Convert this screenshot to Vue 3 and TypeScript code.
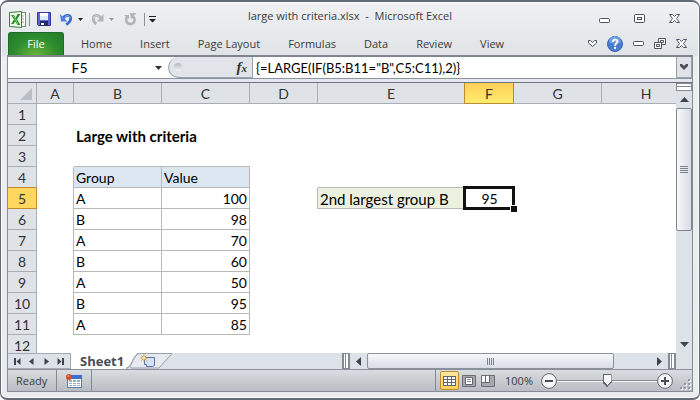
<script setup lang="ts">
import { ref } from 'vue'

interface Row {
  n: number
  b?: string
  c?: string | number
  e?: string
  f?: number
}

const tabs: string[] = ['Home', 'Insert', 'Page Layout', 'Formulas', 'Data', 'Review', 'View']
const columns: string[] = ['A', 'B', 'C', 'D', 'E', 'F', 'G', 'H']
const rows: Row[] = [
  { n: 1 },
  { n: 2, b: 'Large with criteria' },
  { n: 3 },
  { n: 4, b: 'Group', c: 'Value' },
  { n: 5, b: 'A', c: 100, e: '2nd largest group B', f: 95 },
  { n: 6, b: 'B', c: 98 },
  { n: 7, b: 'A', c: 70 },
  { n: 8, b: 'B', c: 60 },
  { n: 9, b: 'A', c: 50 },
  { n: 10, b: 'B', c: 95 },
  { n: 11, b: 'A', c: 85 },
  { n: 12 },
]

const cellName = ref('F5')
const formula = ref('{=LARGE(IF(B5:B11="B",C5:C11),2)}')
const zoom = ref(50)

function cellClass(row: Row, col: string): Record<string, boolean> {
  const inTable = row.n >= 4 && row.n <= 11 && (col === 'B' || col === 'C')
  return {
    boxed: inTable,
    under: row.n === 3 && (col === 'B' || col === 'C'),
    beside: row.n >= 4 && row.n <= 11 && col === 'A',
    heading: inTable && row.n === 4,
    num: inTable && col === 'C' && row.n > 4,
    title: row.n === 2 && col === 'B',
    label: row.n === 5 && col === 'E',
    'label-top': row.n === 4 && col === 'E',
    'label-side': row.n === 5 && col === 'D',
    active: row.n === 5 && col === 'F',
  }
}

function cellText(row: Row, col: string): string {
  const key = col.toLowerCase() as 'b' | 'c' | 'e' | 'f'
  return String(row[key] ?? '')
}
</script>

<template>
  <div class="window">
    <header class="titlebar">
      <div class="quick">
        <svg width="17" height="17" viewBox="0 0 17 17" aria-hidden="true">
          <rect x="3.500" y="1.500" width="13" height="14" fill="#fff" stroke="#6b9a72" />
          <path d="M12 4h3v2h-3zM12 7h3v2h-3zM12 10h3v2h-3z" fill="#b9d8ba" />
          <path d="M.5 1.500L12.500.5v16L.5 15.500z" fill="#eef7e9" stroke="#378344" />
          <path d="M2 4h3l1.500 3L8.500 3H11.500L8 8.500l3.500 5.500H8.500L6.300 10.500 4.500 13H2l3-4.500z" fill="#269239" />
          <path d="M4 4.500L9 13" stroke="#83c85c" />
        </svg>
        <span class="sep"></span>
        <button class="save" aria-label="Save">
          <svg width="14" height="14" viewBox="0 0 14 14">
            <path d="M.5.5h13v13H1.500l-1-1z" fill="#5f66d3" stroke="#343a99" />
            <path d="M3 1h8v7H3z" fill="#dceaff" />
            <path d="M3 1h8v3H3z" fill="#fff" />
            <path d="M3 9h8v5H3z" fill="#252b66" />
            <path d="M4 11h3v2H4z" fill="#fff" />
          </svg>
        </button>
        <button class="undo" aria-label="Undo">
          <svg width="13" height="13" viewBox="0 0 13 13">
            <path d="M3 5.500C5 1.500 10.700 1 10.700 5.500c0 3-2 4.500-4.500 6" fill="none" stroke="#336bc5" stroke-width="2.800" />
            <path d="M0 1l1 7.500h6.500z" fill="#4b83d8" />
            <path d="M4 4.500C6 2 9.500 2 10.500 5" fill="none" stroke="#8bb4ed" />
          </svg>
        </button>
        <svg class="drop" width="5" height="3" viewBox="0 0 5 3"><path d="M0 0h5L2.500 3z" fill="#222" /></svg>
        <button class="redo" aria-label="Redo">
          <svg width="13" height="13" viewBox="0 0 13 13">
            <path d="M10 5.500C8 1.500 2.300 1 2.300 5.500c0 3 1 4.500 3 5.500" fill="none" stroke="#b1b4b8" stroke-width="2.800" />
            <path d="M12.500 1v7.500H6z" fill="#b1b4b8" />
            <path d="M9 4.500C7 2 3 2 2.500 5.500" fill="none" stroke="#d4d6d8" />
          </svg>
        </button>
        <svg class="drop" width="5" height="3" viewBox="0 0 5 3"><path d="M0 0h5L2.500 3z" fill="#999da2" /></svg>
        <button class="repeat" aria-label="Repeat">
          <svg width="13" height="13" viewBox="0 0 13 13">
            <path d="M3 4c-2 3-.5 7 3.500 7S12 6.500 9 3.500" fill="none" stroke="#b0b3b7" stroke-width="2.500" />
            <path d="M6 0h6.500L7 6z" fill="#b0b3b7" /><path d="M0 2h5v4z" fill="#b0b3b7" />
          </svg>
        </button>
        <span class="sep"></span>
        <svg class="more" width="7" height="7" viewBox="0 0 7 7"><path d="M0 0h7v1H0zM0 3h7L3.500 6.500z" fill="#222" /></svg>
      </div>
      <h1>large with criteria.xlsx&nbsp; -&nbsp; Microsoft Excel</h1>
      <div class="controls">
        <button aria-label="Minimize">
          <svg width="11" height="5" viewBox="0 0 11 5"><rect x=".5" y=".5" width="10" height="4" rx="1" fill="#fff" stroke="#4c5263" /></svg>
        </button>
        <button aria-label="Maximize">
          <svg width="11" height="9" viewBox="0 0 11 9"><rect x=".5" y=".5" width="10" height="8" rx="1" fill="#fff" stroke="#4c5263" /><rect x="3.500" y="3.500" width="4" height="2" fill="#fff" stroke="#4c5263" /></svg>
        </button>
        <button aria-label="Close">
          <svg width="11" height="9" viewBox="0 0 11 9"><path d="M.5.5h3l2 2 2-2h3L7.500 4.500l3 4h-3l-2-2-2 2h-3l3-4z" fill="#fff" stroke="#4c5263" /></svg>
        </button>
      </div>
    </header>

    <nav class="ribbon" aria-label="Ribbon">
      <button class="file">File</button>
      <button v-for="tab in tabs" :key="tab" class="tab">{{ tab }}</button>
      <div class="bookctl">
        <button aria-label="Expand the ribbon">
          <svg width="9" height="7" viewBox="0 0 9 7"><path d="M.5 2V.5h2l2 2 2-2h2V3l-4 3.500L.5 3z" fill="#fff" stroke="#4c5263" /></svg>
        </button>
        <button aria-label="Help">
          <svg width="16" height="16" viewBox="0 0 16 16">
            <circle cx="8" cy="8" r="7.500" fill="#4a7dd0" stroke="#3567b5" />
            <path d="M2 6a6 6 0 0 1 12 0c-3 2-9 2-12 0z" fill="#709ee3" />
            <path d="M5.700 6c0-3.200 4.800-3.200 4.800-.4C10.500 7.500 8 7.500 8 9.800" fill="none" stroke="#fff" stroke-width="1.800" />
            <circle cx="8" cy="12" r="1.200" fill="#fff" />
          </svg>
        </button>
        <button aria-label="Minimize workbook">
          <svg width="11" height="5" viewBox="0 0 11 5"><rect x=".5" y=".5" width="10" height="4" rx="1" fill="#fff" stroke="#4c5263" /></svg>
        </button>
        <button aria-label="Restore workbook">
          <svg width="12" height="11" viewBox="0 0 12 11"><path d="M4.500.5h7v6h-7z" fill="#fff" stroke="#4c5263" /><path d="M6.500 2.500h3v2h-3z" fill="#fff" stroke="#4c5263" /><path d="M.5 4.500h7v6h-7z" fill="#fff" stroke="#4c5263" /><path d="M2.500 6.500h3v2h-3z" fill="#fff" stroke="#4c5263" /></svg>
        </button>
        <button aria-label="Close workbook">
          <svg width="11" height="9" viewBox="0 0 11 9"><path d="M.5.5h3l2 2 2-2h3L7.500 4.500l3 4h-3l-2-2-2 2h-3l3-4z" fill="#fff" stroke="#4c5263" /></svg>
        </button>
      </div>
    </nav>

    <main class="book">
      <div class="formulabar">
        <input v-model="cellName" class="namebox" aria-label="Name box" />
        <svg class="namedrop" width="7" height="4" viewBox="0 0 7 4"><path d="M0 0h7L3.500 4z" fill="#333" /></svg>
        <div class="fxarea">
          <span class="grip"></span>
          <button class="fx" aria-label="Insert function">f<small>x</small></button>
        </div>
        <input v-model="formula" class="formula" aria-label="Formula bar" />
        <button class="expand" aria-label="Expand formula bar">
          <svg width="8" height="6" viewBox="0 0 8 6"><path d="M0 0h2l2 2 2-2h2v2L4 6 0 2z" fill="#4a4f58" /></svg>
        </button>
      </div>

      <div class="sheet">
        <div class="cells">
          <table>
            <colgroup>
              <col class="w-head" /><col class="w-a" /><col class="w-b" /><col class="w-b" /><col class="w-d" /><col class="w-e" /><col class="w-f" /><col class="w-b" /><col />
            </colgroup>
            <thead>
              <tr>
                <th class="corner" aria-label="Select all">
                  <svg width="12" height="12" viewBox="0 0 12 12"><path d="M12 0v12H0z" fill="#b9bec5" /></svg>
                </th>
                <th v-for="c in columns" :key="c" scope="col" :class="{ picked: c === 'F', 'pre-picked': c === 'E' }">{{ c }}</th>
              </tr>
            </thead>
            <tbody>
              <tr v-for="row in rows" :key="row.n">
                <th scope="row" :class="{ picked: row.n === 5, 'over-picked': row.n === 4 }">{{ row.n }}</th>
                <td v-for="c in columns" :key="c" :class="cellClass(row, c)">{{ cellText(row, c) }}<i v-if="row.n === 5 && c === 'F'" class="cursor"></i></td>
              </tr>
            </tbody>
          </table>
        </div>
        <div class="vscroll">
          <span class="splitter"></span>
          <button class="arrow" aria-label="Scroll up"><svg width="9" height="5" viewBox="0 0 9 5"><path d="M4.500 0L9 5H0z" fill="#3f434a" /></svg></button>
          <div class="track"><span class="thumb"><i></i><i></i><i></i><i></i></span></div>
          <button class="arrow" aria-label="Scroll down"><svg width="9" height="5" viewBox="0 0 9 5"><path d="M0 0h9L4.500 5z" fill="#3f434a" /></svg></button>
        </div>
      </div>

      <div class="sheetbar">
        <div class="nav">
          <button aria-label="First sheet"><svg width="7" height="7" viewBox="0 0 7 7"><path d="M0 0h2v7H0zM6.500 0v7L2.500 3.500z" fill="#3f444d" /></svg></button>
          <button aria-label="Previous sheet"><svg width="7" height="7" viewBox="0 0 7 7"><path d="M5.500 0v7L1 3.500z" fill="#3f444d" /></svg></button>
          <button aria-label="Next sheet"><svg width="7" height="7" viewBox="0 0 7 7"><path d="M1.500 0v7L6 3.500z" fill="#3f444d" /></svg></button>
          <button aria-label="Last sheet"><svg width="7" height="7" viewBox="0 0 7 7"><path d="M.5 0v7L4.500 3.500zM5 0h2v7H5z" fill="#3f444d" /></svg></button>
        </div>
        <button class="sheettab">Sheet1</button>
        <button class="newtab" aria-label="Insert worksheet">
          <svg width="48" height="16" viewBox="0 0 48 16">
            <path d="M0 15.500C7 15 7 .5 14 .5H46L33 15H6C3 15 3 11 4 9" fill="#e6e9ee" stroke="#9aa1ab" />
            <path d="M0 0H13C7 1 6 15 0 15z" fill="#fff" />
            <path d="M0 15C6 14 7 1 13 .5" fill="none" stroke="#9aa1ab" />
            <path d="M18.500 4.500h10v8l-2 1h-6v-2h-2z" fill="#d5e2f5" stroke="#5673a8" />
            <path d="M18 1.500v7M14.500 5h7M15.500 2.500l5 5M20.500 2.500l-5 5" stroke="#d68a29" />
            <circle cx="18" cy="5" r="1.500" fill="#fff4b0" />
          </svg>
        </button>
        <span class="fill"></span>
        <span class="hsplit"></span>
        <button class="harrow" aria-label="Scroll left"><svg width="5" height="9" viewBox="0 0 5 9"><path d="M5 0v9L0 4.500z" fill="#3f434a" /></svg></button>
        <div class="htrack"><span class="hthumb"><i></i><i></i><i></i><i></i></span></div>
        <button class="harrow" aria-label="Scroll right"><svg width="5" height="9" viewBox="0 0 5 9"><path d="M0 0v9l5-4.500z" fill="#3f434a" /></svg></button>
        <span class="hsplit"></span>
        <span class="bend"></span>
      </div>

      <footer class="status">
        <span class="ready">Ready</span>
        <button class="macro" aria-label="Record macro">
          <svg width="16" height="14" viewBox="0 0 16 14">
            <rect x="1.500" y="1.500" width="14" height="12" fill="#fff" stroke="#5579b6" />
            <path d="M1 1h15v4H1z" fill="#3b6fd0" />
            <path d="M3 6h3v2H3zM7 6h3v2H7zM11 6h3v2h-3zM3 9h3v1H3zM7 9h3v1H7zM11 9h3v1h-3zM3 11h3v1H3zM7 11h3v1H7zM11 11h3v1h-3z" fill="#9aabc8" />
            <circle cx="3" cy="3" r="3" fill="#cf4a32" /><circle cx="2.500" cy="2" r="1" fill="#f09a80" />
          </svg>
        </button>
        <span class="fill"></span>
        <div class="views">
          <button class="view on" aria-label="Normal view">
            <svg width="13" height="10" viewBox="0 0 13 10"><path d="M0 0h13v10H0z" fill="#62656b" /><path d="M1 1h3v2H1zM5 1h3v2H5zM9 1h3v2H9zM1 4h3v2H1zM5 4h3v2H5zM9 4h3v2H9zM1 7h3v2H1zM5 7h3v2H5zM9 7h3v2H9z" fill="#fff" /></svg>
          </button>
          <button class="view" aria-label="Page layout view">
            <svg width="14" height="12" viewBox="0 0 14 12"><path d="M.5.5h13v11H.5z" fill="#a5a9af" stroke="#6a6e75" /><path d="M3.500 2.500h7v7h-7z" fill="#fff" stroke="#62666d" /><path d="M5 4.500h4M5 6.500h4" stroke="#85898f" /></svg>
          </button>
          <button class="view" aria-label="Page break preview">
            <svg width="14" height="12" viewBox="0 0 14 12"><path d="M.5.5h13v11H.5z" fill="#a5a9af" stroke="#6a6e75" /><path d="M1 1h3v6H1zM5 1h3v6H5z" fill="#fff" /><path d="M4.500 1v6M8.500 1v6.500H1" fill="none" stroke="#62666d" /></svg>
          </button>
        </div>
        <button class="pct">100%</button>
        <button aria-label="Zoom out"><svg width="16" height="16" viewBox="0 0 16 16"><circle cx="8" cy="8" r="7.400" fill="#f5f6f8" stroke="#62676f" /><path d="M4 7h8v2H4z" fill="#4b4f56" /></svg></button>
        <input v-model="zoom" class="slider" type="range" min="0" max="100" aria-label="Zoom" />
        <button aria-label="Zoom in"><svg width="16" height="16" viewBox="0 0 16 16"><circle cx="8" cy="8" r="7.400" fill="#f5f6f8" stroke="#62676f" /><path d="M4 7h3V4h2v3h3v2H9v3H7V9H4z" fill="#4b4f56" /></svg></button>
        <svg class="resize" width="12" height="12" viewBox="0 0 12 12"><path d="M9 1h2v2H9zM5 5h2v2H5zM9 5h2v2H9zM1 9h2v2H1zM5 9h2v2H5zM9 9h2v2H9z" fill="#fff" /><path d="M8 0h2v2H8zM4 4h2v2H4zM8 4h2v2H8zM0 8h2v2H0zM4 8h2v2H4zM8 8h2v2H8z" fill="#9299a3" /></svg>
      </footer>
    </main>
  </div>
</template>

<style>
body {
  margin: 0;
  background: #fff;
}
</style>

<style scoped>
* {
  box-sizing: border-box;
}
button,
input {
  font: inherit;
  color: inherit;
  margin: 0;
  padding: 0;
  border: 0;
  background: none;
}
button {
  display: flex;
  align-items: center;
  justify-content: center;
}
svg {
  display: block;
  flex: none;
}
.window {
  display: flex;
  flex-direction: column;
  height: 100vh;
  min-height: 300px;
  padding: 0 6px 6px;
  border: 2px solid #656b77;
  border-width: 2px 1px 2px 1px;
  border-radius: 8px 8px 7px 7px;
  background: linear-gradient(#f0f1f3, #dfe3e7 54px, #eceef0 55px, #e9ebee);
  box-shadow: inset 0 0 0 1px #fafbfc;
  font: 11px/16px "Open Sans", "Noto Sans", sans-serif;
  color: #3b3b3b;
  overflow: hidden;
}
.titlebar {
  display: grid;
  grid-template-columns: 1fr auto 1fr;
  align-items: center;
  height: 30px;
  flex: none;
}
.titlebar h1 {
  margin: 0;
  padding-bottom: 2px;
  font-size: 11px;
  font-weight: 400;
  line-height: 16px;
  white-space: nowrap;
}
.quick {
  display: flex;
  align-items: center;
  padding: 4px 0 0 2px;
}
.sep {
  width: 1px;
  height: 13px;
  margin-left: 3px;
  background: #8d929a;
}
.save {
  margin-left: 7px;
}
.undo {
  margin-left: 9px;
}
.drop {
  margin-left: 5px;
}
.redo {
  margin-left: 8px;
}
.repeat {
  margin: 0 4px 0 10px;
}
.more {
  margin-left: 4px;
}
.controls {
  display: flex;
  align-self: stretch;
  justify-content: flex-end;
  align-items: flex-end;
  gap: 24px;
  padding: 0 13px 9px 0;
}
.ribbon {
  display: flex;
  height: 23px;
  flex: none;
  margin-left: 1px;
}
.file {
  width: 56px;
  margin-right: 3px;
  border: 1px solid #1d6b29;
  border-bottom: 0;
  border-radius: 3px 3px 0 0;
  background: radial-gradient(ellipse at 50% 110%, #6ab83a, #2c8b2e 60%, #247a2b);
  color: #fff;
}
.tab {
  padding: 0 14px;
}
.bookctl {
  display: flex;
  align-items: center;
  gap: 10px;
  margin-left: auto;
  padding-right: 6px;
}
.book {
  display: flex;
  flex-direction: column;
  flex: 1;
  min-height: 0;
  border: 1px solid #868c95;
  border-top: 2px solid #7f858e;
}
.formulabar {
  display: flex;
  height: 26px;
  flex: none;
  border-bottom: 1px solid #6f757f;
  background: linear-gradient(#fff 21px, #8e949d 21px, #8e949d 22px, #e3e7f1 22px);
  padding-bottom: 4px;
  font: 14px/20px Lato, "Open Sans", sans-serif;
  color: #000;
}
.namebox {
  width: 143px;
  text-align: center;
}
.namedrop {
  align-self: center;
  margin: 0 6px 0 4px;
}
.fxarea {
  display: flex;
  align-items: center;
  justify-content: space-between;
  width: 85px;
  padding: 0 5px;
  border: 1px solid #9ba1aa;
  border-top: 0;
  border-radius: 11px 0 0 11px;
  background: #e1e5e9;
}
.grip {
  width: 8px;
  height: 8px;
  border-radius: 4px;
  background: linear-gradient(#b4b8be, #f5f6f8);
}
.fx {
  align-items: baseline;
  font: italic bold 15px/18px "Liberation Serif", serif;
  color: #333;
}
.fx small {
  font-size: 11px;
}
.formula {
  flex: 1;
  min-width: 0;
  padding-left: 3px;
  font-size: 13px;
}
.expand {
  width: 16px;
  border: 1px solid #9ba1aa;
  border-top: 0;
  background: #dfe3e8;
}
.sheet {
  display: flex;
  flex: 1;
  min-height: 0;
}
.cells {
  flex: 1;
  min-width: 0;
  overflow: hidden;
  background: #fff;
}
table {
  width: 100%;
  min-width: 682px;
  table-layout: fixed;
  border-collapse: separate;
  border-spacing: 0;
  font: 14px/18px Lato, "Open Sans", sans-serif;
  color: #000;
}
.w-head { width: 29px; }
.w-a { width: 37px; }
.w-b { width: 88px; }
.w-d { width: 68px; }
.w-e { width: 147px; }
.w-f { width: 49px; }
th,
td {
  height: 21px;
  padding: 2px 0 0;
  border: 0 solid #b9b9b9;
  vertical-align: top;
}
th {
  border-color: #a9aeb6;
  border-width: 0 1px 1px 0;
  background: #dfe3e8;
  font-weight: 400;
  color: #333;
}
thead th:last-child {
  border-right: 0;
}
.corner svg {
  margin: 3px 0 0 12px;
}
.picked {
  border-color: #c28a2f;
  background: #ffd65e;
}
thead .picked {
  background: linear-gradient(#ffcf57, #ffec70);
}
.pre-picked {
  border-right-color: #c28a2f;
}
.over-picked {
  border-bottom-color: #c28a2f;
}
td {
  padding-left: 2px;
  white-space: nowrap;
}
.boxed {
  border-width: 0 1px 1px 0;
}
.under,
.label-top {
  border-bottom-width: 1px;
}
.beside,
.label-side {
  border-right-width: 1px;
}
.heading {
  background: #dce6f1;
}
.num {
  padding-right: 2px;
  text-align: right;
}
.title {
  font-size: 15px;
  font-weight: 700;
}
.label {
  border-bottom-width: 1px;
  background: #ebf1de;
  font-size: 15px;
}
.active {
  position: relative;
  padding-left: 0;
  text-align: center;
}
.cursor {
  position: absolute;
  inset: -2px -1px -1px -2px;
  border: 3px solid #111;
  pointer-events: none;
}
.cursor::after {
  content: "";
  position: absolute;
  right: -5px;
  bottom: -5px;
  width: 6px;
  height: 6px;
  border: solid #fff;
  border-width: 1px 0 0 1px;
  background: #111;
}
.vscroll {
  display: flex;
  flex-direction: column;
  width: 16px;
  flex: none;
  background: #dde1e8;
}
.splitter {
  height: 8px;
  flex: none;
  border: 1px solid #858b94;
  background: linear-gradient(#fff 2px, #858b94 2px, #858b94 3px, #fff 3px);
}
.arrow {
  height: 17px;
  flex: none;
}
.track {
  flex: 1;
}
.thumb {
  display: flex;
  flex-direction: column;
  align-items: center;
  justify-content: center;
  gap: 1px;
  height: 54%;
  border: 1px solid #7d8591;
  border-radius: 2px;
  background: linear-gradient(90deg, #f6f8fa, #d8dde5);
}
.thumb i {
  width: 8px;
  height: 1px;
  background: #7b828d;
}
.sheetbar {
  display: flex;
  height: 17px;
  flex: none;
  border-bottom: 1px solid #8b919b;
  background: #dde1e8;
}
.nav {
  display: flex;
  align-items: center;
  justify-content: space-around;
  width: 63px;
  padding: 0 2px;
  border: 1px solid #a5abb4;
  border-left: 0;
}
.sheettab {
  padding: 0 2px 0 9px;
  background: #fff;
  font-size: 13px;
  font-weight: 700;
  color: #474d57;
}
.fill {
  flex: 1;
}
.hsplit {
  width: 8px;
  border: 2px solid #858b94;
  border-width: 1px 2px;
  background: linear-gradient(90deg, #fff 1px, #858b94 1px, #858b94 2px, #fff 2px);
}
.harrow {
  width: 17px;
}
.htrack {
  flex: 0 1 284px;
  display: flex;
}
.hthumb {
  display: flex;
  align-items: center;
  justify-content: center;
  gap: 1px;
  width: 87%;
  border: 1px solid #8b929c;
  border-radius: 2px;
  background: linear-gradient(#f6f8fa, #d8dde5);
}
.hthumb i {
  width: 1px;
  height: 7px;
  background: #7b828d;
}
.bend {
  width: 16px;
}
.status {
  display: flex;
  align-items: center;
  height: 21px;
  flex: none;
  background: linear-gradient(#d9dce0, #b9bdc3);
}
.ready {
  padding: 0 9px 0 8px;
}
.macro {
  height: 21px;
  padding: 0 9px;
  border: 1px solid #858a92;
  border-width: 0 1px;
}
.views {
  display: flex;
  align-items: center;
  padding-left: 4px;
  border-left: 1px solid #858a92;
  height: 21px;
}
.view {
  width: 19px;
  height: 19px;
}
.on {
  border: 1px solid #c28a2f;
  border-radius: 2px;
  background: linear-gradient(#ffe9a0, #ffd257);
}
.pct {
  margin: 0 8px;
}
.slider {
  width: 100px;
  height: 16px;
  appearance: none;
  background: linear-gradient(transparent 7px, #858b95 7px, #858b95 8px, #f3f4f6 8px, #f3f4f6 9px, transparent 9px);
}
.slider::-webkit-slider-thumb {
  appearance: none;
  width: 9px;
  height: 13px;
  background: conic-gradient(from -42deg at 50% 11px, #f5f6f8 84deg, #5c626c 0);
  clip-path: polygon(0 0, 100% 0, 100% 65%, 50% 100%, 0 65%);
  box-shadow: inset 0 0 0 1px #5c626c;
}
.resize {
  align-self: flex-end;
  margin-left: 7px;
}
</style>
